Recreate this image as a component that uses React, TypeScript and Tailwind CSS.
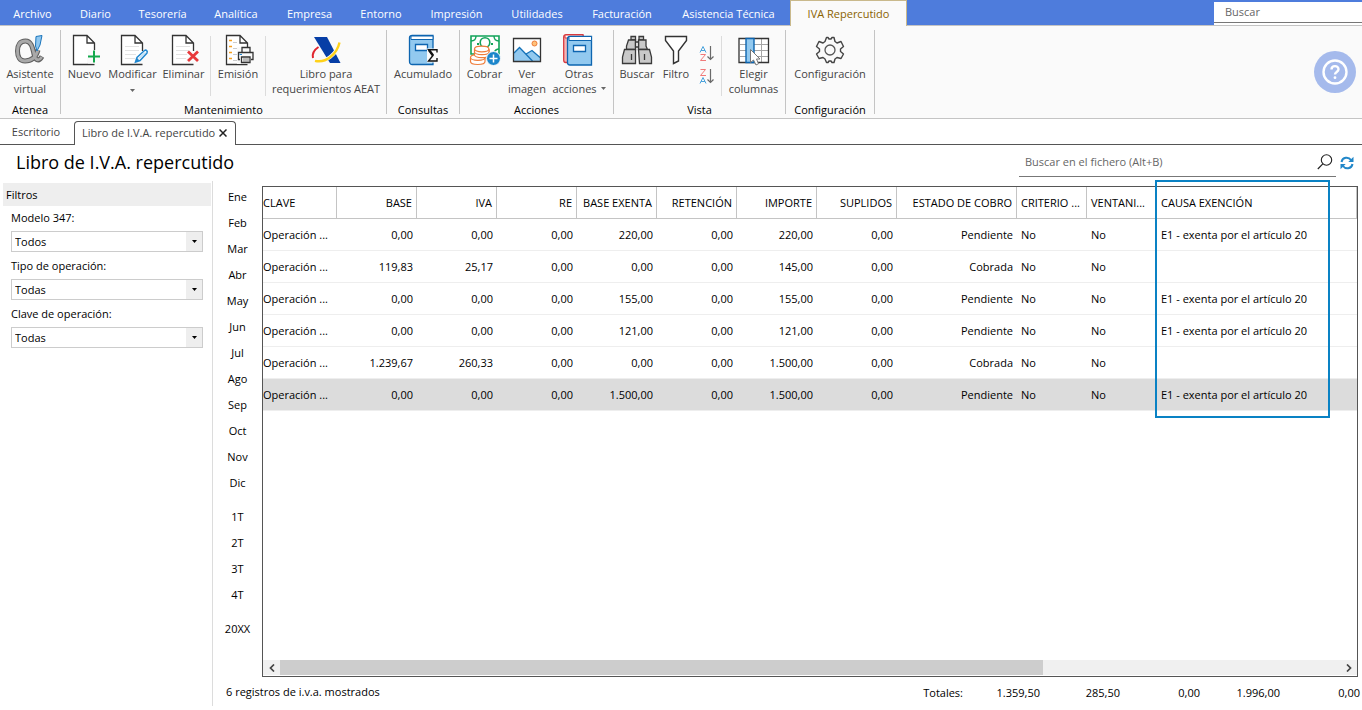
import React from "react";

type Kids = { children?: React.ReactNode };

function Svg({ children }: Kids) {
  return (
    <svg width="32" height="32" viewBox="0 0 32 32" fill="none" aria-hidden="true" className="shrink-0">
      {children}
    </svg>
  );
}

function Sheet() {
  return (
    <>
      <path d="M4.5 1.5H18L25.5 9V17L18 24V30.5H4.5Z" fill="#fff" />
      <path d="M25.5 30.5H4.5V1.5H18L25.5 9V17M18 1.5V9H25.5" stroke="#333" strokeWidth="1.3" />
    </>
  );
}

function SheetLines() {
  return <path d="M8 12.5H22M8 16.5H22M8 20.5H19M8 24.5H18" stroke="#e2e2e2" />;
}

const AlphaIcon = () => (
  <Svg>
    <path d="M24 16C22 23 18 27 11 27C6 27 3.500 23 3.500 17C3.500 11 6 7 11.500 7C17 7 18.500 13 20 20C21 26 24.500 28.500 28 22.500" stroke="#5f5f5f" strokeWidth="5" />
    <path d="M24 16C22 23 18 27 11 27C6 27 3.500 23 3.500 17C3.500 11 6 7 11.500 7C17 7 18.500 13 20 20C21 26 24.500 28 27.800 23" stroke="#a9a9a9" strokeWidth="2.800" />
    <path d="M22 2.500 28 1.500 26 11 23 17 21.500 12Z" fill="#8fc7f0" stroke="#1b75bb" />
  </Svg>
);

const NewIcon = () => (
  <Svg>
    <Sheet />
    <path d="M19 16H28V29.500H19Z" fill="#fafafa" />
    <path d="M25 16.500V28.500M19 22.500H31" stroke="#12a84b" strokeWidth="2" />
  </Svg>
);

const EditIcon = () => (
  <Svg>
    <Sheet />
    <SheetLines />
    <path d="M18.500 28 20 23.500 27.500 16.500C29 15.500 31 17 30 19L23 26.500Z" fill="#fff" stroke="#2187cf" strokeWidth="1.500" />
    <path d="M18.500 28 20 24 22.500 26.500Z" fill="#2187cf" />
    <path d="M22 24.500 28 18.500" stroke="#8fc7f0" />
  </Svg>
);

const DeleteIcon = () => (
  <Svg>
    <Sheet />
    <SheetLines />
    <path d="M20 17.500 30 27M30 17.500 20 27" stroke="#fafafa" strokeWidth="5" />
    <path d="M20 17.500 30 27M30 17.500 20 27" stroke="#e8393b" strokeWidth="2.800" />
  </Svg>
);

const PrintIcon = () => (
  <Svg>
    <Sheet />
    <path d="M7 6.500H10M7 12.500H10M7 18.500H10M7 24.500H10" stroke="#f5a020" strokeWidth="1.300" />
    <path d="M11 8.500H15M11 14.500H16M11 20.500H15M11 26.500H15" stroke="#ccc" />
    <path d="M15 13H32V30H15Z" fill="#fafafa" />
    <path d="M20 18V13.500H28V18M18 25.500H16.500V18.500H31V25.500H29" stroke="#333" strokeWidth="1.300" />
    <path d="M19.500 23H28V28.500H19.500Z" fill="#fff" stroke="#333" strokeWidth="1.300" />
    <path d="M21 25H27M21 27H27" stroke="#777" />
    <path d="M17.500 20.500H20" stroke="#2187cf" />
  </Svg>
);

const TaxIcon = () => (
  <Svg>
    <path d="M4 3H17L30.500 29H20Z" fill="#063ea6" />
    <path d="M8.500 13C4 16 2 20 3 24" stroke="#e0242e" strokeWidth="2" />
    <path d="M5 26.500C16 29 27 20 29.500 8.500" stroke="#fafafa" strokeWidth="3.600" />
    <path d="M5 26.800C16 29.500 27 20 29.500 8.500" stroke="#ffd21a" strokeWidth="2.400" />
  </Svg>
);

const LedgerSumIcon = () => (
  <Svg>
    <path d="M2.500 3.500C2.500 1.500 4 1.500 5 1.500H26V30.500H5C3 30.500 2.500 29 2.500 27Z" fill="#92c9ef" stroke="#0d65b0" strokeWidth="1.300" />
    <path d="M4 2H26V5.500H4Z" fill="#fff" stroke="#0d65b0" />
    <path d="M8.500 10.500H20.500V16.500H8.500Z" fill="#fff" stroke="#0d65b0" strokeWidth="1.300" />
    <path d="M20 14.500H32V28.500H20Z" fill="#fafafa" />
    <path d="M22 16 26 21.500" stroke="#111" strokeWidth="2.400" />
    <path d="M30 18.500V15.700H21.500L26 21.500 21.500 27H30V24" stroke="#111" strokeWidth="1.400" />
  </Svg>
);

const CashIcon = () => (
  <Svg>
    <path d="M2 2H30V20H2Z" fill="#fff" stroke="#12a35a" strokeWidth="1.600" />
    <path d="M2 7C6 7 7 5 7 2M25 2C25 5 26 7 30 7M30 15C27 15 26 16 25 19" stroke="#12a35a" strokeWidth="1.400" />
    <circle cx="16" cy="8.500" r="4.800" stroke="#12a35a" strokeWidth="1.600" />
    <path d="M8 10H10M22 10H24" stroke="#12a35a" strokeWidth="2" />
    <g fill="#fff" stroke="#ee7d3b" strokeWidth="1.200">
      <path d="M1.500 24V27.500C1.500 31.500 16 31.500 16 27.500V24" />
      <ellipse cx="8.700" cy="23.500" rx="7.200" ry="2.800" />
      <path d="M5.500 18V21C6 24.500 20 24.500 20 21V16" />
      <path d="M5.500 15V18C6 21.500 20 21.500 20 18V15" />
      <ellipse cx="12.700" cy="15" rx="7.200" ry="2.800" />
    </g>
    <circle cx="24.500" cy="24.500" r="7" fill="#1c86cb" stroke="#fafafa" />
    <path d="M24.500 20.500V28.500M20.500 24.500H28.500" stroke="#fff" strokeWidth="1.500" />
  </Svg>
);

const ImageIcon = () => (
  <Svg>
    <path d="M2.500 4.500H29.500V27.500H2.500Z" fill="#fff" />
    <path d="M3 19 8.500 13.500 15 20 21.500 16.500 29 23V27H3Z" fill="#92c9ef" />
    <path d="M3 19 8.500 13.500 21.500 27M15 20 21 16.500 29 23.500" stroke="#1673b9" strokeWidth="1.300" />
    <circle cx="23.500" cy="9.500" r="2.500" fill="#ffc27a" stroke="#ee7d3b" />
    <path d="M2.500 4.500H29.500V27.500H2.500Z" stroke="#333" strokeWidth="1.300" />
  </Svg>
);

const BooksIcon = () => (
  <Svg>
    <path d="M.7 3C.7 1 2 .7 3.500 .7H20V28.500H3C1 28.500 .7 27.500 .7 26Z" fill="#f5b4b4" stroke="#d93a3f" strokeWidth="1.300" />
    <path d="M2 1H20V4H2Z" fill="#fff" stroke="#d93a3f" />
    <path d="M4.500 5C4.500 3 5.500 2.500 7 2.500H28.500V31H7C5 31 4.500 30 4.500 28.500Z" fill="#92c9ef" stroke="#0d65b0" strokeWidth="1.300" />
    <path d="M6 2.500H28.500V6.500H6Z" fill="#fff" stroke="#0d65b0" />
    <path d="M10.500 11.500H22.500V17.500H10.500Z" fill="#fff" stroke="#0d65b0" strokeWidth="1.300" />
  </Svg>
);

const BinocularsIcon = () => (
  <Svg>
    <g fill="#c9c9c9" stroke="#3a3a3a" strokeWidth="1.300">
      <path d="M10 2.500H14.500V6H10ZM18 2.500H22.500V6H18Z" />
      <path d="M7.500 6H14.500V15.500H5.500V12ZM17.500 6H25V12L26.500 15.500H17.500Z" />
      <path d="M14.500 8H17.500V13H14.500Z" fill="#fafafa" />
      <path d="M3.500 15.500H14.500V29.500H1.500V23ZM17.500 15.500H28.500L30.500 23V29.500H18.500Z" />
      <path d="M10.500 20V26M23.500 20V26" fill="none" />
    </g>
  </Svg>
);

const FilterIcon = () => (
  <Svg>
    <path d="M5.500 2.500H26.500V6.500L18.500 17V27L13.500 29.500V17L5.500 6.500Z" fill="#fff" stroke="#333" strokeWidth="1.400" />
  </Svg>
);

function SortIcon({ flipped = false }: { flipped?: boolean }) {
  const letterA = flipped ? "M1 14.500 4 8.500 7 14.500M2 12.500H6" : "M1 6.500 4 .5 7 6.500M2 4.500H6";
  const letterZ = flipped ? "M1.500 .5H6.500L1.500 6.500H7" : "M1.500 8.500H6.500L1.500 14.500H7";
  return (
    <svg width="16" height="15" viewBox="0 0 16 15" fill="none" aria-hidden="true">
      <path d={letterA} stroke="#4ba3dc" />
      <path d={letterZ} stroke="#f07a7a" />
      <path d="M11.500 0V13.500M8.500 10.500 11.500 13.500 14.500 10.500" stroke="#6a6a6a" strokeWidth="1.200" />
    </svg>
  );
}

const ColumnsIcon = () => (
  <Svg>
    <path d="M1 4.500H30.500V28.500H1Z" fill="#fff" />
    <path d="M2 10.500H30M2 16.500H30M2 22.500H30M23.500 5V28" stroke="#a5a5a5" />
    <path d="M1 4.500H30.500V28.500H1Z" stroke="#333" strokeWidth="1.300" />
    <path d="M8 4.500H16V28.500H8Z" fill="#92c9ef" stroke="#0d65b0" strokeWidth="1.400" />
    <path d="M12.500 15.500V28.500L15.500 26 18 31 20.500 29.700 18.500 25H22Z" fill="#fff" stroke="#777" />
  </Svg>
);

const GearIcon = () => (
  <Svg>
    <path
      d="M12.500 3.500H14L15 5H17L18 3.500H20L21 7.500L23 9L27 7.500L29.500 12.500L26.500 15V17.500L29.500 20L27 24.500L23 23.500L21 25L20 28.500H18L17 27H15L14 28.500H12.500L11 25L9 23.500L5 24.500L2.500 20L5.500 17.500V15L2.500 12.500L5 7.500L9 9L11 7.500Z"
      stroke="#444"
      strokeWidth="1.400"
      strokeLinejoin="round"
    />
    <circle cx="16" cy="16" r="5" stroke="#555" strokeWidth="1.300" />
  </Svg>
);

function Caret({ className = "" }: { className?: string }) {
  return (
    <svg width="5" height="3" viewBox="0 0 5 3" aria-hidden="true" className={className}>
      <path d="M0 0H5L2.500 3Z" fill="currentColor" />
    </svg>
  );
}

function Tool({ width, icon, lines, caret = false }: { width: string; icon: React.ReactNode; lines: string[]; caret?: boolean }) {
  return (
    <button type="button" className={`flex flex-col items-center pt-2 text-[#444] ${width}`}>
      {icon}
      <span className="flex flex-col items-center whitespace-nowrap">
        {lines.map((line, i) => (
          <span key={line} className="flex items-center gap-1">
            {line}
            {caret && i > 0 && <Caret className="text-[#666]" />}
          </span>
        ))}
        {caret && lines.length === 1 && <Caret className="mt-2 text-[#666]" />}
      </span>
    </button>
  );
}

const Divider = () => <span className="mt-2.5 h-[60px] w-px shrink-0 bg-[#dcdcdc]" />;

function Group({ label, children }: Kids & { label: string }) {
  return (
    <section className="relative flex shrink-0 flex-col border-r border-transparent after:absolute after:top-1 after:-right-px after:bottom-1 after:w-px after:bg-[#c4c4c4]">
      <div className="flex h-[76px] items-start">{children}</div>
      <h2 className="pb-px text-center text-black">{label}</h2>
    </section>
  );
}

const menu = [
  ["Archivo", "w-[65px]"],
  ["Diario", "w-[61px]"],
  ["Tesorería", "w-[73px]"],
  ["Analítica", "w-[74px]"],
  ["Empresa", "w-[73px]"],
  ["Entorno", "w-[70px]"],
  ["Impresión", "w-[81px]"],
  ["Utilidades", "w-[80px]"],
  ["Facturación", "w-[90px]"],
  ["Asistencia Técnica", "w-[123px]"],
];

const filters = [
  { id: "modelo", label: "Modelo 347:", value: "Todos" },
  { id: "tipo", label: "Tipo de operación:", value: "Todas" },
  { id: "clave", label: "Clave de operación:", value: "Todas" },
];

const periods = [
  ["Ene", "Feb", "Mar", "Abr", "May", "Jun", "Jul", "Ago", "Sep", "Oct", "Nov", "Dic"],
  ["1T", "2T", "3T", "4T"],
  ["20XX"],
];

const columns = [
  { name: "CLAVE", width: "w-[74px]", right: false },
  { name: "BASE", width: "w-20", right: true },
  { name: "IVA", width: "w-20", right: true },
  { name: "RE", width: "w-20", right: true },
  { name: "BASE EXENTA", width: "w-20", right: true },
  { name: "RETENCIÓN", width: "w-20", right: true },
  { name: "IMPORTE", width: "w-20", right: true },
  { name: "SUPLIDOS", width: "w-20", right: true },
  { name: "ESTADO DE COBRO", width: "w-[120px]", right: true },
  { name: "CRITERIO ...", width: "w-[70px]", right: false },
  { name: "VENTANI...", width: "w-[70px]", right: false },
  { name: "CAUSA EXENCIÓN", width: "w-[173px]", right: false },
];

const exempt = "E1 - exenta por el artículo 20";
const rows = [
  ["Operación ...", "0,00", "0,00", "0,00", "220,00", "0,00", "220,00", "0,00", "Pendiente", "No", "No", exempt],
  ["Operación ...", "119,83", "25,17", "0,00", "0,00", "0,00", "145,00", "0,00", "Cobrada", "No", "No", ""],
  ["Operación ...", "0,00", "0,00", "0,00", "155,00", "0,00", "155,00", "0,00", "Pendiente", "No", "No", exempt],
  ["Operación ...", "0,00", "0,00", "0,00", "121,00", "0,00", "121,00", "0,00", "Pendiente", "No", "No", exempt],
  ["Operación ...", "1.239,67", "260,33", "0,00", "0,00", "0,00", "1.500,00", "0,00", "Cobrada", "No", "No", ""],
  ["Operación ...", "0,00", "0,00", "0,00", "1.500,00", "0,00", "1.500,00", "0,00", "Pendiente", "No", "No", exempt],
];

function TopBar() {
  return (
    <header className="flex h-[26px] border-b border-[#c4c4c4] bg-[#4e7cdc]">
      <nav className="flex">
        {menu.map(([name, width]) => (
          <button key={name} type="button" className={`pt-0.5 text-center whitespace-nowrap text-white ${width}`}>
            {name}
          </button>
        ))}
        <button type="button" className="-mb-px w-[117px] border border-b-0 border-[#c9b98c] bg-[#fafafa] text-center whitespace-nowrap text-[#8a6200]">
          IVA Repercutido
        </button>
      </nav>
      <div className="ml-auto w-[148px] bg-white">
        <input
          aria-label="Buscar"
          placeholder="Buscar"
          className="block h-[23px] w-full border-t-2 border-b border-t-[#4e7cdc] border-b-[#777] bg-white px-[11px] pb-0.5 outline-none placeholder:text-[#666]"
        />
      </div>
    </header>
  );
}

function Ribbon() {
  return (
    <div className="flex border-b border-[#c4c4c4] bg-[#fafafa]">
      <Group label="Atenea">
        <Tool width="w-[60px]" icon={<AlphaIcon />} lines={["Asistente", "virtual"]} />
      </Group>
      <Group label="Mantenimiento">
        <Tool width="w-[47px]" icon={<NewIcon />} lines={["Nuevo"]} />
        <Tool width="w-[49px]" icon={<EditIcon />} lines={["Modificar"]} caret />
        <Tool width="w-[53px]" icon={<DeleteIcon />} lines={["Eliminar"]} />
        <Divider />
        <Tool width="w-[54px]" icon={<PrintIcon />} lines={["Emisión"]} />
        <Divider />
        <Tool width="w-[120px]" icon={<TaxIcon />} lines={["Libro para", "requerimientos AEAT"]} />
      </Group>
      <Group label="Consultas">
        <Tool width="w-[72px]" icon={<LedgerSumIcon />} lines={["Acumulado"]} />
      </Group>
      <Group label="Acciones">
        <Tool width="w-[49px]" icon={<CashIcon />} lines={["Cobrar"]} />
        <Tool width="w-[36px]" icon={<ImageIcon />} lines={["Ver", "imagen"]} />
        <Tool width="w-[68px]" icon={<BooksIcon />} lines={["Otras", "acciones"]} caret />
      </Group>
      <Group label="Vista">
        <Tool width="w-[46px]" icon={<BinocularsIcon />} lines={["Buscar"]} />
        <Tool width="w-[32px]" icon={<FilterIcon />} lines={["Filtro"]} />
        <div className="flex w-[29px] flex-col items-center gap-2 pt-5">
          <button type="button" aria-label="Orden ascendente">
            <SortIcon />
          </button>
          <button type="button" aria-label="Orden descendente">
            <SortIcon flipped />
          </button>
        </div>
        <Divider />
        <Tool width="w-[63px]" icon={<ColumnsIcon />} lines={["Elegir", "columnas"]} />
      </Group>
      <Group label="Configuración">
        <Tool width="w-[88px]" icon={<GearIcon />} lines={["Configuración"]} />
      </Group>
      <button type="button" aria-label="Ayuda" className="mr-1.5 ml-auto flex size-[42px] items-center justify-center self-center rounded-full bg-[#a5baec]">
        <svg width="28" height="28" viewBox="0 0 28 28" fill="none" aria-hidden="true">
          <circle cx="14" cy="14" r="11.500" stroke="#fff" strokeWidth="2.400" />
          <path d="M10.500 11.500C10.500 7 17.500 7 17.500 11.300C17.500 14 14 14 14 16.500" stroke="#fff" strokeWidth="2.400" />
          <circle cx="14" cy="19.700" r="1.400" fill="#fff" />
        </svg>
      </button>
    </div>
  );
}

function DocumentTabs() {
  return (
    <div className="flex h-[26px] items-end">
      <button type="button" className="h-full w-[74px] border-b border-[#555] pr-0.5 text-center text-[#444]">
        Escritorio
      </button>
      <div className="flex h-6 w-[162px] items-center gap-1 rounded-t border border-b-0 border-[#555] pb-0.5 pl-[7px] whitespace-nowrap text-[#444]">
        <button type="button">Libro de I.V.A. repercutido</button>
        <button type="button" aria-label="Cerrar pestaña">
          <svg width="8" height="8" viewBox="0 0 8 8" aria-hidden="true">
            <path d="M.5.5 7.500 7.500M7.500.5.5 7.500" stroke="#222" strokeWidth="1.500" />
          </svg>
        </button>
      </div>
      <div className="h-full flex-1 border-b border-[#555]" />
    </div>
  );
}

function TitleRow() {
  return (
    <div className="flex h-9 items-start pl-4">
      <h1 className="text-lg leading-[34px]">Libro de I.V.A. repercutido</h1>
      <div className="ml-auto flex h-8 w-[317px] items-center border-b border-[#777] pt-0.5 pr-[3px] pl-1.5">
        <input aria-label="Buscar en el fichero" placeholder="Buscar en el fichero (Alt+B)" className="h-7 min-w-0 flex-1 outline-none placeholder:text-[#666]" />
        <svg width="16" height="16" viewBox="0 0 16 16" fill="none" aria-hidden="true">
          <circle cx="9.500" cy="6" r="5.200" stroke="#222" strokeWidth="1.100" />
          <path d="M5.800 9.800.8 15" stroke="#222" strokeWidth="1.200" />
        </svg>
      </div>
      <button type="button" aria-label="Actualizar" className="mt-[11px] mr-2 ml-1">
        <svg width="14" height="14" viewBox="0 0 14 14" fill="none" aria-hidden="true">
          <path d="M1.500 6C2.500 1 8.500 .5 11 4M12.500 8C11.500 13 5.500 13.500 3 10" stroke="#2187c9" strokeWidth="2" />
          <path d="M13.500 .8V6H8.300ZM.5 13.200V8H5.700Z" fill="#2187c9" />
        </svg>
      </button>
    </div>
  );
}

function FilterPanel() {
  return (
    <aside className="mb-1 w-[213px] shrink-0 border-r border-[#dcdcdc] pt-0.5 pr-px pl-[3px]">
      <h2 className="h-[23px] bg-[#eee] pl-[3px] leading-[23px]">Filtros</h2>
      <form className="flex flex-col gap-1 px-2 pt-0.5">
        {filters.map(({ id, label, value }) => (
          <div key={id} className="flex flex-col gap-1">
            <label htmlFor={id} className="leading-[19px]">
              {label}
            </label>
            <div className="relative">
              <select id={id} className="block h-[21px] w-full appearance-none border border-[#ccc] bg-white pr-5 pl-[3px] outline-none">
                <option>{value}</option>
              </select>
              <span className="pointer-events-none absolute inset-y-px right-px flex w-4 items-center justify-center bg-[#eee]">
                <Caret />
              </span>
            </div>
          </div>
        ))}
      </form>
    </aside>
  );
}

function Periods() {
  return (
    <nav className="flex w-[49px] shrink-0 flex-col gap-2 pt-0.5">
      {periods.map((list) => (
        <div key={list[0]} className="flex flex-col">
          {list.map((p) => (
            <button key={p} type="button" className="h-[26px] text-center">
              {p}
            </button>
          ))}
        </div>
      ))}
    </nav>
  );
}

function Grid() {
  return (
    <div className="relative mt-[5px] mr-1 flex flex-1 flex-col border border-[#555]">
      <div className="flex-1 overflow-hidden">
        <table className="w-full table-fixed border-separate border-spacing-0">
          <thead>
            <tr className="h-8">
              {columns.map(({ name, width, right }, i) => (
                <th
                  key={name}
                  className={`overflow-hidden border-r border-b border-[#c4c4c4] p-0 font-normal whitespace-nowrap ${width} ${right ? "pr-1 text-right" : i ? "pl-1 text-left" : "text-left"}`}
                >
                  {name}
                </th>
              ))}
              <th className="border-r border-b border-[#c4c4c4]" />
            </tr>
          </thead>
          <tbody>
            {rows.map((row, r) => (
              <tr key={r} className={r === 5 ? "h-8 bg-[#dcdcdc]" : "h-8"}>
                {row.map((cell, i) => (
                  <td
                    key={i}
                    className={`overflow-hidden border-b border-[#eee] p-0 whitespace-nowrap ${columns[i].right ? "pr-1 text-right" : i ? "pl-1" : ""}`}
                  >
                    {cell}
                  </td>
                ))}
                <td className="border-b border-[#eee]" />
              </tr>
            ))}
          </tbody>
        </table>
      </div>
      <div className="flex h-4 items-stretch border-b border-white bg-[#f0f0f0]">
        <button type="button" aria-label="Desplazar a la izquierda" className="flex w-[17px] items-center justify-center">
          <svg width="6" height="8" viewBox="0 0 6 8" fill="none" aria-hidden="true">
            <path d="M5 .5 1.500 4 5 7.500" stroke="#444" strokeWidth="1.700" />
          </svg>
        </button>
        <div className="flex-1">
          <div className="h-full w-[72%] bg-[#cdcdcd]" />
        </div>
        <button type="button" aria-label="Desplazar a la derecha" className="flex w-[17px] items-center justify-center">
          <svg width="6" height="8" viewBox="0 0 6 8" fill="none" aria-hidden="true">
            <path d="M1 .5 4.500 4 1 7.500" stroke="#444" strokeWidth="1.700" />
          </svg>
        </button>
      </div>
      <div className="pointer-events-none absolute -top-[7px] left-[892px] h-[238px] w-[175px] border-2 border-[#0a82c4]" />
    </div>
  );
}

function StatusBar() {
  return (
    <footer className="flex h-[33px] items-center pb-1 pl-[13px]">
      <p>6 registros de i.v.a. mostrados</p>
      <dl className="ml-auto flex pt-0.5 pr-0.5 text-right">
        <dt>Totales:</dt>
        {["1.359,50", "285,50", "0,00", "1.996,00", "0,00"].map((v, i) => (
          <dd key={i} className={i ? "w-20" : "w-[77px]"}>
            {v}
          </dd>
        ))}
      </dl>
    </footer>
  );
}

export default function App() {
  return (
    <div className="flex min-h-screen flex-col bg-white font-['Open_Sans','Noto_Sans',sans-serif] text-[11px] leading-[15px] text-black">
      <TopBar />
      <Ribbon />
      <DocumentTabs />
      <TitleRow />
      <main className="flex flex-1">
        <FilterPanel />
        <div className="flex min-w-0 flex-1 flex-col">
          <div className="flex flex-1">
            <Periods />
            <Grid />
          </div>
          <StatusBar />
        </div>
      </main>
    </div>
  );
}
